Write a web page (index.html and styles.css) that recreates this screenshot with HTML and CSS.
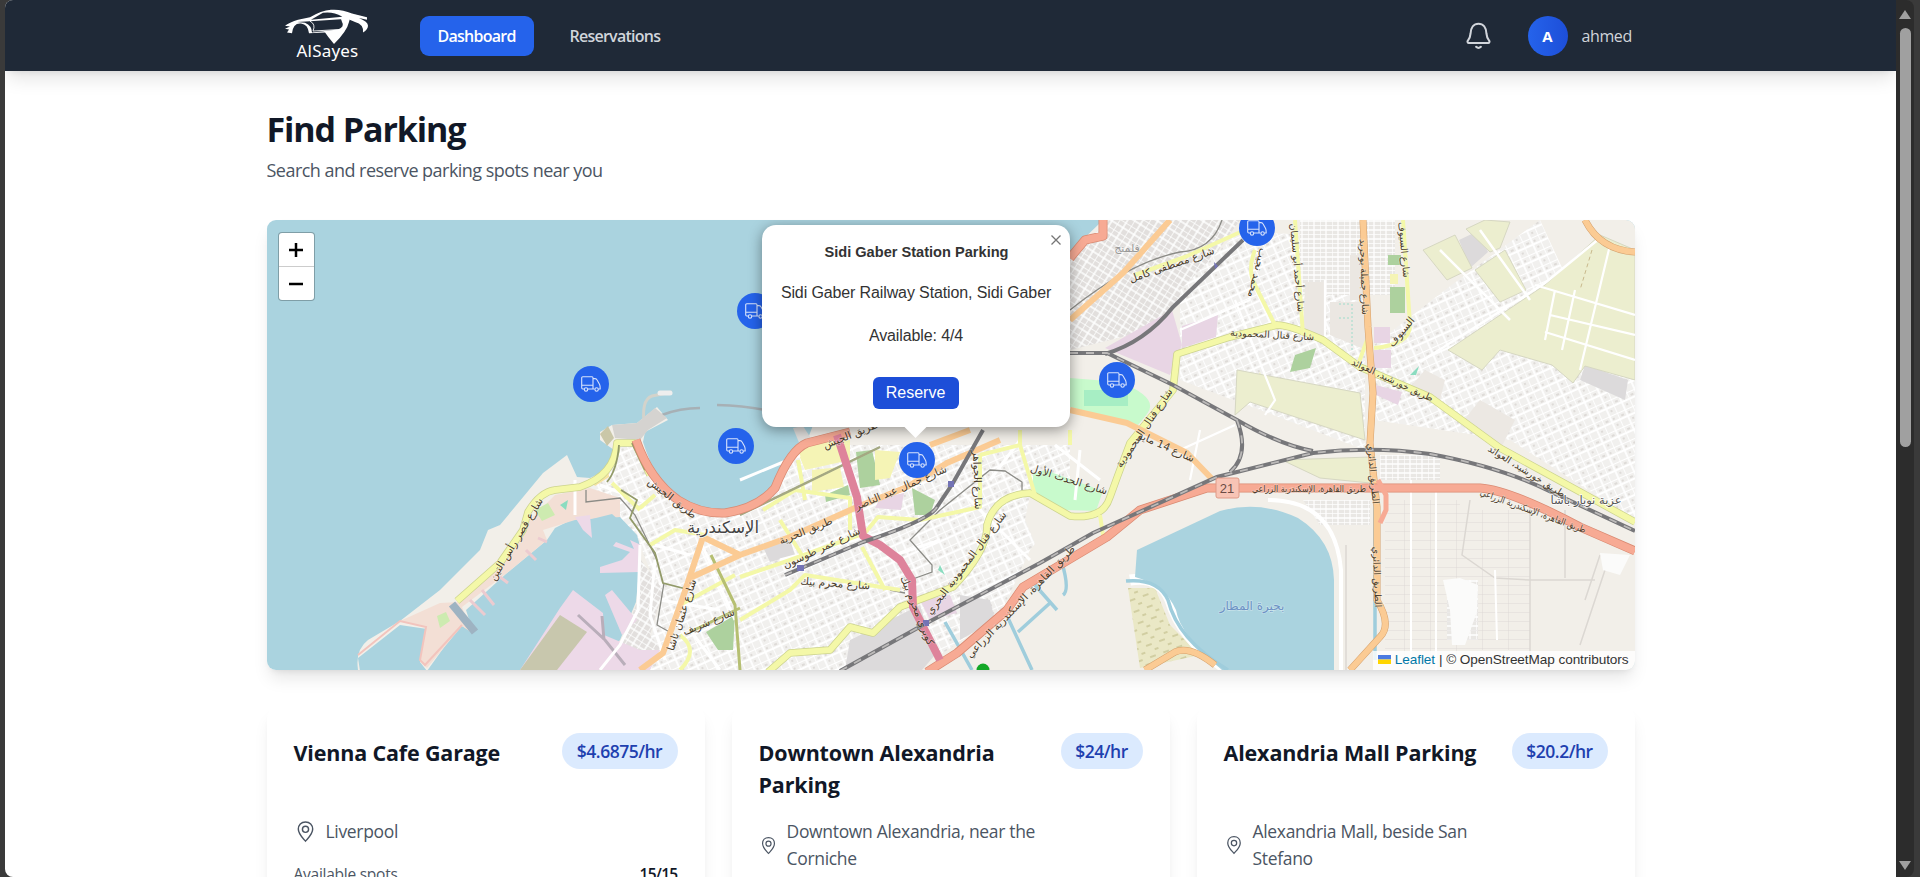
FILE: index.html
```html
<!DOCTYPE html>
<html lang="en">
<head>
<meta charset="utf-8">
<title>AlSayes</title>
<link rel="stylesheet" href="styles.css">
</head>
<body>
<div class="window">
<div class="page">
  <header class="navbar">
    <div class="nav-inner">
      <a class="logo">
        <svg class="logo-car" viewBox="0 0 84 50" fill="none" stroke="#fff">
          <path fill="#fff" stroke="none" d="M0 22Q5 17 13 14L25 11Q36 2 46 1Q57 0 67 6L82 11V14L74 12Q83 17 83 22Q83 27 78 31Q79 20 70 17L57 10Q48 3 38 5L26 14L60 10V13L25 16L12 17L20 18Q27 22 27 31L41 29 40 31 24 32Q23 20 16 19Q8 18 7 32L2 31 4 27 0 26 5 23Z"/>
          <path stroke-width="1" d="M25 16Q31 20 28 29L54 27"/>
          <path fill="#fff" stroke="none" d="M56 13Q57 7 62 9Q66 11 64 17Q62 29 49 46Q43 37 39 29L53 27Q60 23 57 17Z"/>
        </svg>
        <span>AlSayes</span>
      </a>
      <nav class="links"><a class="active"><span>Dashboard</span></a><a><span>Reservations</span></a></nav>
      <div class="account">
        <svg class="bell" viewBox="0 0 24 24" fill="none" stroke="#d1d5db" stroke-width="1.7" stroke-linecap="round" stroke-linejoin="round"><path d="M4 18.2H20C21 18.2 21.4 17 20.8 16.2C19.3 14.5 18.8 13.5 18.6 10.5C18.4 5.5 16 2.2 12 2.2S5.6 5.5 5.4 10.5C5.2 13.5 4.7 14.5 3.2 16.2C2.6 17 3 18.2 4 18.2ZM10 21.4Q12 23.3 14 21.4"/></svg>
        <span class="avatar">A</span><span class="user">ahmed</span>
      </div>
    </div>
  </header>
  <main class="content">
    <h1>Find Parking</h1>
    <p class="subtitle">Search and reserve parking spots near you</p>
    <section class="map">
      <svg class="tiles" viewBox="267 220 1368 450">
        <defs>
          <pattern id="blocks" width="17" height="15" patternUnits="userSpaceOnUse" patternTransform="rotate(-24)"><rect width="17" height="15" fill="#f1f0ee"/><path d="M0 0H17M0 7H17M0 0V15M9 0V15" stroke="#fff" stroke-width="1.8"/><path d="M3 4H6M12 11H14M12 3V5" stroke="#dedbd8" stroke-width="2"/></pattern>
          <pattern id="dense" width="13" height="12" patternUnits="userSpaceOnUse" patternTransform="rotate(32)"><rect width="13" height="12" fill="#e2dfdd"/><path d="M0 0H13M0 6H13M0 0V12M7 0V12" stroke="#fff" stroke-width="1.5"/></pattern>
          <pattern id="grid" width="12" height="9" patternUnits="userSpaceOnUse"><rect width="12" height="9" fill="#e9e7e4"/><path d="M0 0H12M0 5H12M0 0V9M6 0V9" stroke="#fff" stroke-width="1.3"/></pattern>
          <pattern id="plots" width="26" height="9" patternUnits="userSpaceOnUse"><path d="M0 0H26M0 0V9" stroke="#d9d6d2" stroke-width=".8" fill="none"/></pattern>
          <pattern id="crops" width="14" height="12" patternUnits="userSpaceOnUse" patternTransform="rotate(-20)"><rect width="14" height="12" fill="#eae8c6"/><path d="M2 3H8M9 9H13" stroke="#b9b47d"/></pattern>
        </defs>
        <rect x="267" y="220" width="1368" height="450" fill="#aad3df"/>
        <!-- land -->
        <path fill="#f2efe9" d="M358 670Q355 650 368 640L400 621L440 590L480 550L488 530L500 525L543 473L567 455L577 477L590 478L610 468L614 450L600 440L600 432L612 425L637 423L657 407L668 420L645 432L643 442Q655 480 676 500Q695 512 720 512Q750 510 773 488Q782 468 790 452L807 441L815 420H1065L1072 250L1100 223V220H1635V670Z"/>
        <path fill="url(#blocks)" d="M620 445H642Q655 495 690 510Q745 522 773 492L800 445H1070V500L1030 550L1000 615L940 655L840 670H640L662 600L640 545L605 500L590 490Z"/>
        <path fill="#f2efe9" d="M1030 495L1070 514 1100 517 1098 530 1042 560 1025 520Z"/>
        <path fill="url(#dense)" d="M1070 255L1110 220H1240L1190 290 1150 330 1070 350Z"/>
        <path fill="url(#dense)" d="M641 560L663 590 650 635 665 655 640 670H600L622 640 638 600Z"/>
        <path fill="url(#blocks)" d="M1180 290L1240 230 1365 240V450L1260 410 1180 380Z"/>
        <path fill="url(#grid)" d="M1300 220H1395V295H1300Z"/>
        <path fill="#ebe7e2" d="M1305 282H1325V345L1303 335ZM1330 302H1366V350L1330 335ZM1350 255H1364V300H1350Z"/>
        <path fill="url(#blocks)" d="M1374 345L1445 290L1540 220L1600 350 1635 380V520L1510 440 1374 420Z"/>
        <path fill="#ece8e3" d="M1480 400L1515 420 1500 450 1460 425ZM1425 370L1445 380 1440 400 1412 385Z"/>
        <!-- western harbour -->
        <path fill="#aad3df" d="M360 671L358 658 400 625 427 629 420 662 427 671 460 625 473 632 466 610 507 573 547 540 555 528 575 518 620 517 637 535 641 550 636 602 620 640 593 671Z"/>
        <path fill="#f3dfd5" d="M400 621L426 627L420 662L427 668L462 626L472 633L462 607L507 573L547 540L543 530L575 520L620 517L620 498L590 488L555 495L530 520L500 565L460 602L440 603Z"/>
        <path d="M358 655L400 621L426 627L420 660L425 665L462 625" fill="none" stroke="#f2c4bd" stroke-width="2"/>
        <path fill="#aad3df" d="M588 520L612 514 630 530 632 548 600 540 592 534Z"/>
        <path fill="#edd9e8" d="M575 517L590 515 592 538 583 530ZM600 567L622 560 630 552 613 546 616 542 634 549 630 540 641 545 640 572 600 573ZM520 670L560 608L573 590L603 613L604 635L640 650L660 650L650 670ZM605 595L612 590L637 620L622 635Z"/>
        <path fill="#c8c7ad" d="M520 670L560 615L587 632L557 670Z"/>
        <path d="M452 604L475 632" stroke="#9eb3c2" stroke-width="8"/>
        <path d="M470 600L485 615M482 590L494 605M500 577L508 583M526 550L536 560M538 538L547 542" stroke="#eccbd0" stroke-width="3"/>
        <path fill="#cdebb0" d="M535 510L548 503 555 515 542 521ZM437 616L446 612 450 621 440 628Z"/>
        <path d="M578 615L605 640L625 665M602 616L604 640" stroke="#b9aeba" stroke-width="3" fill="none"/>
        <path d="M645 430Q640 400 652 396L672 392" fill="none" stroke="#d3d3cb" stroke-width="3"/>
        <path d="M660 393H670" stroke="#eee" stroke-width="5" stroke-linecap="round"/>
        <path d="M662 415Q680 408 700 408M717 405Q750 406 775 412" fill="none" stroke="#a7b0b5" stroke-width="2.5"/>
        <path fill="#d5d3d0" d="M612 425L637 423 655 408 667 418 648 430 640 440 615 438Z"/>
        <path fill="#cac7a8" d="M600 434L608 426 614 438 607 446Z"/>
        <path fill="#f7e3a0" d="M590 480L608 466 609 477 595 486Z"/>
        <path fill="#e0dedc" d="M793 428L800 445 812 440 803 426Z"/>
        <!-- parks and areas -->
        <g fill="#add19e"><path d="M856 452L872 450 880 485 860 488ZM912 488L935 500 930 515 915 515ZM706 632L735 615 733 650 718 650ZM1390 287H1405V313H1390ZM1388 255H1401V265H1388ZM1295 355L1316 348 1310 368 1290 372ZM825 495L848 485 850 495 826 502Z"/></g>
        <path fill="#c8facc" d="M1033 474L1045 470L1103 491L1096 511L1065 510L1033 492ZM1070 378L1120 382Q1160 398 1147 414L1138 425L1070 407Z"/>
        <path fill="#a7eec4" d="M1084 390H1128V406H1084Z"/>
        <path fill="#8bdcc0" d="M560 505L568 500 566 510ZM1410 375L1419 366 1416 375ZM940 565L945 575 938 570ZM1458 595L1463 597 1460 601Z"/>
        <path d="M1339 304H1350M1339 318H1350M1352 304V350" stroke="#9edccb" stroke-dasharray="2 2" fill="none"/>
        <path fill="#f5f4b5" d="M795 445L850 440 850 460 805 470ZM875 450L900 452 890 478 875 480ZM812 470L840 467 844 487 812 492ZM1390 274H1398V284H1390ZM1252 390L1260 372 1262 380Z"/>
        <path fill="#e8d5e4" d="M880 498L904 493 901 510 875 508ZM1105 348L1172 310L1182 345L1170 375ZM1182 326L1218 315 1216 337 1182 348ZM1374 327H1390V343H1374ZM1374 350H1391V368H1374ZM1376 385L1402 392 1398 405 1376 395ZM920 600L950 595 957 613 930 620Z"/>
        <path fill="#dcdadb" d="M850 640L920 605L935 655L922 670H845ZM960 595L990 600 995 620 960 640ZM1459 240L1478 231 1488 252 1470 268ZM1585 365L1628 380 1625 400 1580 380ZM762 545L790 540 795 555 770 562Z"/>
        <g fill="#eceecf" stroke="#d6d7c2"><path d="M1423 250L1455 235 1472 268 1447 280ZM1466 229L1485 220 1510 222 1500 248 1490 252ZM1475 270L1505 250 1526 290 1500 302ZM1448 350L1545 285L1600 235L1635 250V380L1585 366L1573 383L1552 365L1500 350L1482 370ZM1237 370L1360 393 1365 440 1250 402 1235 415ZM1282 460L1370 457 1370 483 1320 478Z"/></g>
        <path d="M1535 285L1635 315M1550 315L1635 335M1545 332L1635 360M1610 245L1580 370M1555 290L1545 340M1575 290L1562 350" stroke="#fff" stroke-width="2.200" fill="none"/>
        <path d="M1592 250L1580 290" stroke="#c9b98c" stroke-dasharray="4 3"/>
        <path d="M1600 238L1545 283L1420 362M1440 250L1510 320M1480 230L1530 300" stroke="#fff" stroke-width="2.500" fill="none"/>
        <path d="M1180 330L1250 300M1235 300L1275 400L1265 415M1325 280V340M1180 450L1235 425M1200 430L1190 480" fill="none" stroke="#fff" stroke-width="2.200"/>
        <path fill="url(#grid)" d="M1303 500H1370V525H1320ZM1380 455H1440V480H1380ZM1447 580H1478V640H1447Z"/>
        <path fill="url(#plots)" d="M1385 500H1460V655H1385ZM1460 510H1530V650H1460Z"/>
        <path d="M1470 500L1462 555 1495 578 1530 580M1530 500V670M1565 510V578M1530 580H1595M1600 555L1585 600M1610 555L1580 645M1346 545V670" stroke="#dbd7d2" fill="none" stroke-width="1.5"/>
        <path d="M1436 490V670M1411 480V660M1495 570L1497 640" stroke="#fff" fill="none" stroke-width="2"/>
        <path fill="#fbfbfa" d="M1443 580L1460 578 1478 585 1477 612 1465 645 1452 645 1450 610ZM1600 553L1630 555 1620 575 1603 570Z"/>
        <!-- lakes and canals -->
        <path fill="url(#crops)" d="M1128 588L1155 588L1170 625L1200 655L1140 668Z"/>
        <path d="M1130 580Q1160 575 1170 600Q1182 640 1225 668" fill="none" stroke="#fff" stroke-width="11"/>
        <path fill="#aad3df" d="M1137 550L1220 511Q1260 500 1298 518Q1333 540 1334 580V670H1222Q1180 635 1176 610Q1165 585 1135 577Z"/>
        <path d="M1268 500Q1335 500 1341 570V670" fill="none" stroke="#fff" stroke-width="4"/>
        <path d="M1126 581Q1158 578 1168 600Q1178 640 1228 670M1062 563Q1070 590 1063 595M1035 585L1057 610M1050 603L1018 632M1008 618L1032 670M945 622L972 670M1375 500V660" fill="none" stroke="#9fcddc" stroke-width="3.5"/>
        <!-- minor streets -->
        <g fill="none" stroke="#fff" stroke-width="3"><path d="M640 545L638 610L620 645L600 670M655 560L650 615 665 660M655 545L690 555M660 600L720 610M600 485L648 503M575 480V515M700 540L735 620M690 630L720 670M740 480L800 455M780 560L930 520M950 480L1030 560M1020 440L990 480M880 560L940 540M1080 450L1075 500M1055 445L1100 480"/></g>
        <g fill="none" stroke="#8b8b86" stroke-width="1.3"><path d="M586 490V502L620 498L635 515L657 560M664 583L657 625L675 635M740 515L880 447M940 510L990 470 1005 471 1022 482V490M940 510L910 540L932 565V572L910 580M890 590L905 593M1222 220Q1212 250 1180 252Q1130 262 1070 310"/></g>
        <!-- yellow roads -->
        <g fill="none" stroke="#ccd38e" stroke-width="7.5" stroke-linejoin="round"><path d="M457 601L500 563L523 530L528 512Q540 492 555 490L580 487Q615 475 617 443H635L650 475"/><path d="M1500 448L1430 397L1360 367L1323 340Q1290 325 1277 325L1230 337L1177 354L1173 390L1130 443L1118 475L1110 497Q1103 520 1070 516L1030 493Q995 495 987 525Q988 550 953 587L900 607L873 633L850 627L830 650L790 653L768 672M1500 448L1635 522"/></g>
        <g fill="none" stroke="#f4f8a8" stroke-width="6" stroke-linejoin="round"><path d="M457 601L500 563L523 530L528 512Q540 492 555 490L580 487Q615 475 617 443H635L650 475"/><path d="M1500 448L1430 397L1360 367L1323 340Q1290 325 1277 325L1230 337L1177 354L1173 390L1130 443L1118 475L1110 497Q1103 520 1070 516L1030 493Q995 495 987 525Q988 550 953 587L900 607L873 633L850 627L830 650L790 653L768 672M1500 448L1635 522"/>
        <path stroke-width="4" d="M1255 250Q1247 270 1255 285L1275 325M1295 220L1303 335M1403 220L1410 325Q1410 345 1374 348M1367 340L1358 365M1135 275L1185 257L1245 230M740 577L790 560L865 533L878 517L920 520L980 507V455M763 510L795 490 850 498V530M798 460L805 500M780 520L805 560M740 620L790 590L805 575L900 590M862 547L885 590M612 483L640 510M640 508L655 495M650 545L675 530L705 535M680 605L735 575M1035 495L1020 445 980 455M1020 445V430M1070 445V430M1100 515L1103 535M680 635Q700 650 680 670"/></g>
        <path d="M619 445Q617 470 607 482M632 443L645 470M621 490L637 500L630 518L655 553L663 583L690 590" fill="none" stroke="#929a69" stroke-width="1.8"/>
        <path d="M711 555L735 605L740 670M690 632L740 608" fill="none" stroke="#b6bf72" stroke-width="3"/>
        <path d="M740 515L880 447" fill="none" stroke="#a4a882" stroke-width="2.5"/>
        <!-- orange roads -->
        <g fill="none" stroke="#d4a06c" stroke-width="7"><path d="M1363 220L1368 327L1373 393L1370 443L1377 507V600Q1392 625 1380 637L1350 670M1585 220Q1600 250 1635 252M1145 670L1175 652Q1190 645 1215 665"/></g>
        <g fill="none" stroke="#fbcb94" stroke-width="6" stroke-linejoin="round"><path d="M1363 220L1368 327L1373 393L1370 443L1377 507V600Q1392 625 1380 637L1350 670M1585 220Q1600 250 1635 252M1145 670L1175 652Q1190 645 1215 665"/><path d="M703 537L683 597L663 653L640 670M703 537L740 555L790 537L857 507L907 487L947 463L1000 440M690 578L740 555M1170 220L1123 273L1070 320M1070 410L1127 423L1187 453L1213 480M930 445L970 430"/></g>
        <!-- primary roads -->
        <g fill="none" stroke="#d98a72" stroke-width="9" stroke-linejoin="round"><path d="M636 440Q650 480 678 500Q700 514 725 513Q758 508 775 488Q790 450 807 443L850 432M927 672L957 653L1007 610L1023 587L1107 537L1140 510L1207 488H1480Q1510 490 1580 527L1635 551M1070 258L1085 240L1103 236V220"/></g>
        <g fill="none" stroke="#f7aa94" stroke-width="7.5" stroke-linejoin="round"><path d="M636 440Q650 480 678 500Q700 514 725 513Q758 508 775 488Q790 450 807 443L850 432M927 672L957 653L1007 610L1023 587L1107 537L1140 510L1207 488H1480Q1510 490 1580 527L1635 551M1070 258L1085 240L1103 236V220"/><path stroke-width="5" d="M1378 480L1386 495V510L1380 523"/></g>
        <path d="M837 435L857 497L863 536L880 545L900 560L912 580L913 607L940 660" fill="none" stroke="#de839b" stroke-width="8" stroke-linejoin="round"/>
        <!-- railways -->
        <g fill="none" stroke="#77777a" stroke-width="4"><path d="M840 671L923 625L1040 563L1093 533L1217 477L1313 453Q1373 446 1430 454Q1500 467 1547 490L1635 531M1070 353H1107L1173 385L1237 420Q1280 445 1313 451M1105 354Q1145 342 1173 307L1243 240M1237 420Q1250 455 1230 472M983 430L953 483L937 507Q930 520 863 542L785 575"/></g>
        <g fill="none" stroke="#bcbab9" stroke-width="1.8" stroke-dasharray="8 8"><path d="M840 671L923 625L1040 563L1093 533L1217 477L1313 453Q1373 446 1430 454Q1500 467 1547 490L1635 531M1070 353H1107L1173 385L1237 420Q1280 445 1313 451M1237 420Q1250 455 1230 472M937 507Q930 520 863 542L785 575"/></g>
        <path d="M948 481H954V487H948ZM797 565H804V571H797ZM923 620H929V626H923ZM1214 262L1218 266 1215 269Z" fill="#7373b5"/>
        <circle cx="983" cy="670" r="6.500" fill="#14a827"/>
        <!-- labels -->
        <g class="labels">
          <text class="city" x="723" y="533">الإسكندرية</text>
          <text class="place" x="1586" y="504">عزبة نوبار باشا</text>
          <text class="lake" x="1252" y="610">بحيرة المطار</text>
          <text class="small" x="1127" y="252">فلمنج</text>
          <text transform="translate(519 541) rotate(-59)">شارع قصر رأس التين</text>
          <text transform="translate(670 501) rotate(38)">طريق الجيش</text>
          <text transform="translate(852 438) rotate(-22)">طريق الجيش</text>
          <text transform="translate(685 616) rotate(-72)">شارع عثمان باشا</text>
          <text transform="translate(710 625) rotate(-22)">شارع شريف</text>
          <text transform="translate(807 534) rotate(-22)">طريق الحرية</text>
          <text transform="translate(823 551) rotate(-25)">شارع عمر طوسون</text>
          <text transform="translate(902 491) rotate(-23)">شارع جمال عبد الناصر</text>
          <text transform="translate(835 587) rotate(4)">شارع محرم بيك</text>
          <text transform="translate(914 612) rotate(68)">كوبري محرم بيك</text>
          <text transform="translate(974 480) rotate(88)">شارع الجواهر</text>
          <text transform="translate(969 565) rotate(-53)">شارع قنال المحمودية البحري</text>
          <text transform="translate(1023 604) rotate(-46)">طريق القاهرة، الإسكندرية الزراعي</text>
          <text transform="translate(1068 483) rotate(17)">شارع الحدث الأول</text>
          <text transform="translate(1147 430) rotate(-56)">شارع قنال المحمودية</text>
          <text transform="translate(1165 450) rotate(24)">شارع 14 مايو</text>
          <text transform="translate(1173 268) rotate(-19)">شارع مصطفى كامل</text>
          <text transform="translate(1254 272) rotate(104)">محمد نجيب</text>
          <text class="tight" transform="translate(1294 268) rotate(85)">شارع أحمد أبو سليمان</text>
          <text class="tight" transform="translate(1361 277) rotate(88)">شارع جميلة بوحريد</text>
          <text class="tight" transform="translate(1401 250) rotate(85)">شارع السيوف</text>
          <text transform="translate(1404 334) rotate(-50)">السيوف</text>
          <text class="tight" transform="translate(1272 338) rotate(3)">شارع قنال المحمودية</text>
          <text class="tight" transform="translate(1391 383) rotate(25)">طريق خورشيد، العوائد</text>
          <text class="tight" transform="translate(1525 474) rotate(32)">طريق خورشيد، العوائد</text>
          <text class="tight" textLength="114" lengthAdjust="spacingAndGlyphs" transform="translate(1309 492)">طريق القاهرة، الإسكندرية الزراعي</text>
          <text class="tight" textLength="112" lengthAdjust="spacingAndGlyphs" transform="translate(1532 514) rotate(20)">طريق القاهرة، الإسكندرية الزراعي</text>
          <text class="tight" transform="translate(1370 474) rotate(85)">الطريق الدائري</text>
          <text class="tight" transform="translate(1374 577) rotate(88)">الطريق الدائري</text>
        </g>
        <rect x="1216" y="478" width="23" height="20" rx="2" fill="#f8c4b5" stroke="#df9a87"/>
        <text x="1227" y="493" class="shield">21</text>
      </svg>
      <svg width="0" height="0" class="defs"><symbol id="van" viewBox="0 0 20 16"><g fill="none" stroke="#fff" stroke-opacity=".82" stroke-width="1.1" stroke-linejoin="round"><path d="M3 13H1.8Q.7 13 .7 11.8V2Q.7.8 1.8.8H11Q12 .8 12 2V13H7M12 2.6H14Q15.5 2.6 16.1 4L18.6 8.5Q19.2 9.7 19.2 13H17.5M.7 9.3H12M12 13H13.5"/><circle cx="5" cy="13.5" r="1.7"/><circle cx="15.600" cy="13.5" r="1.7"/></g></symbol></svg>
      <div class="marker m1"><svg><use href="#van"/></svg></div>
      <div class="marker m2"><svg><use href="#van"/></svg></div>
      <div class="marker m3"><svg><use href="#van"/></svg></div>
      <div class="marker m4"><svg><use href="#van"/></svg></div>
      <div class="marker m5"><svg><use href="#van"/></svg></div>
      <div class="marker m6"><svg><use href="#van"/></svg></div>
      <div class="zoom"><span><svg viewBox="0 0 14 14"><path d="M0 7H14M7 0V14"/></svg></span><span><svg viewBox="0 0 14 14"><path d="M0 7H14"/></svg></span></div>
      <div class="popup">
        <svg class="close" viewBox="0 0 10 10"><path d="M.5 .5L9.5 9.5M9.5 .5L.5 9.5"/></svg>
        <strong>Sidi Gaber Station Parking</strong>
        <p>Sidi Gaber Railway Station, Sidi Gaber</p>
        <p class="avail">Available: 4/4</p>
        <span class="reserve">Reserve</span>
      </div>
      <div class="attribution"><svg viewBox="0 0 13 9"><path fill="#4c7be1" d="M0 0H13V4.5H0Z"/><path fill="#ffd500" d="M0 4.5H13V9H0Z"/></svg><a>Leaflet</a><span>| © OpenStreetMap contributors</span></div>
    </section>
    <section class="cards">
      <article class="card">
        <div class="card-head"><h2>Vienna Cafe Garage</h2><span class="price p1">$4.6875/hr</span></div>
        <div class="address"><svg class="pin" viewBox="0 0 24 24"><path d="M12 2C7.5 2 4.5 5.2 4.5 9.5C4.5 15 9 18.5 12 22C15 18.5 19.5 15 19.5 9.5C19.5 5.2 16.5 2 12 2Z"/><circle cx="12" cy="9.7" r="3.2"/></svg><span>Liverpool</span></div>
        <div class="spots"><span>Available spots</span><b>15/15</b></div>
      </article>
      <article class="card">
        <div class="card-head"><h2>Downtown Alexandria<br>Parking</h2><span class="price p2">$24/hr</span></div>
        <div class="address"><svg class="pin small-pin" viewBox="0 0 24 24"><path d="M12 2C7.5 2 4.5 5.2 4.5 9.5C4.5 15 9 18.5 12 22C15 18.5 19.5 15 19.5 9.5C19.5 5.2 16.5 2 12 2Z"/><circle cx="12" cy="9.7" r="3.2"/></svg><span>Downtown Alexandria, near the<br>Corniche</span></div>
      </article>
      <article class="card">
        <div class="card-head"><h2>Alexandria Mall Parking</h2><span class="price p3">$20.2/hr</span></div>
        <div class="address"><svg class="pin mid-pin" viewBox="0 0 24 24"><path d="M12 2C7.5 2 4.5 5.2 4.5 9.5C4.5 15 9 18.5 12 22C15 18.5 19.5 15 19.5 9.5C19.5 5.2 16.5 2 12 2Z"/><circle cx="12" cy="9.7" r="3.2"/></svg><span>Alexandria Mall, beside San<br>Stefano</span></div>
      </article>
    </section>
  </main>
</div>
<aside class="scrollbar"><i class="arrow up"></i><i class="thumb"></i><i class="arrow down"></i></aside>
</div>
</body>
</html>
```
FILE: styles.css
```css
* { box-sizing: border-box; }
body { margin: 0; height: 877px; overflow: hidden; background: #3a3a3a; font-family: "Open Sans", "Noto Sans", sans-serif; font-size: 18px; }
.window { display: flex; height: 877px; padding: 0 6px 0 5px; }
.page { width: 1891px; height: 877px; overflow: hidden; background: #fff; border-radius: 8px 0 0 8px; }
.scrollbar { width: 18px; background: #2c2c2c; border-radius: 0 8px 8px 0; display: flex; flex-direction: column; align-items: center; padding: 10px 0 7px; }
.arrow { width: 12px; height: 9px; background: #a0a0a0; }
.up { clip-path: polygon(50% 0, 100% 100%, 0 100%); }
.down { clip-path: polygon(0 0, 100% 0, 50% 100%); margin-top: auto; }
.thumb { width: 11px; height: 419px; margin-top: 9px; background: #a0a0a0; border-radius: 6px; }
.navbar { height: 71px; background: #1f2937; box-shadow: 0 11px 17px -3px rgba(0,0,0,.1), 0 4px 7px -4px rgba(0,0,0,.1); }
.nav-inner { width: 1368px; height: 71px; margin: 0 auto; display: flex; align-items: center; }
.logo { width: 84px; margin-left: 18px; height: 71px; display: flex; flex-direction: column; align-items: center; padding-top: 9px; color: #fff; font: 17px/20px "Noto Sans", sans-serif; }
.logo-car { width: 84px; height: 50px; margin-bottom: -18px; transform: scaleY(.76); transform-origin: top; }
.logo span { letter-spacing: .2px; padding-left: 2px; }
.links { display: flex; margin-left: 51px; }
.links a { height: 40px; padding: 0 18px; border-radius: 9px; display: flex; align-items: center; font-size: 16px; font-weight: 600; color: #d1d5db; letter-spacing: -.75px; white-space: nowrap; }
.links .active { width: 114px; background: #2563eb; color: #fff; margin-right: 18px; }
.account { margin-left: auto; display: flex; align-items: center; padding-right: 4px; }
.bell { width: 29px; height: 29px; }
.avatar { width: 40px; height: 40px; margin: 0 14px 0 35px; border-radius: 50%; background: linear-gradient(90deg, #2563eb, #1d4ed8); color: #fff; font-size: 15px; font-weight: 700; display: grid; place-items: center; }
.user { width: 49px; color: #d1d5db; font-size: 16px; letter-spacing: -.4px; }
.content { width: 1368px; margin: 0 auto; padding-top: 36px; }
h1 { margin: 0; font-size: 34px; line-height: 45px; font-weight: 700; color: #111827; letter-spacing: -1.1px; }
.subtitle { margin: 5px 0 0; line-height: 27px; color: #4b5563; letter-spacing: -.53px; }
.map { position: relative; height: 450px; margin-top: 36px; border-radius: 9px; overflow: clip; box-shadow: 0 11px 17px -3px rgba(0,0,0,.1), 0 4px 7px -4px rgba(0,0,0,.1); font-family: "Liberation Sans", sans-serif; }
.tiles { display: block; width: 1368px; height: 450px; }
.defs { position: absolute; }
.labels text { font: 10.5px "DejaVu Sans", sans-serif; text-anchor: middle; fill: #4a3c2a; stroke: #fff; stroke-opacity: .3; stroke-width: 1.5px; paint-order: stroke; }
.labels .tight { font-size: 9.5px; }
.labels .city { font-size: 16.5px; fill: #444; stroke-opacity: .9; }
.labels .place { font-size: 11.5px; fill: #555; stroke-opacity: .9; }
.labels .small { font-size: 11px; fill: #999; }
.labels .lake { font-size: 12px; fill: #6d92c5; }
.shield { font: 13px "Liberation Sans", sans-serif; text-anchor: middle; fill: #6b4b45; }
.marker { position: absolute; width: 36px; height: 36px; border-radius: 50%; background: #2563eb; display: grid; place-items: center; }
.marker svg { width: 20px; height: 16px; }
.m1 { left: 306px; top: 146px; }
.m2 { left: 470px; top: 73px; }
.m3 { left: 451px; top: 208px; }
.m4 { left: 632px; top: 222px; }
.m5 { left: 832px; top: 142px; }
.m6 { left: 972px; top: -10px; }
.zoom { position: absolute; left: 11px; top: 12px; width: 37px; border: 1.5px solid rgba(0,0,0,.25); border-radius: 4px; background: #fff; background-clip: padding-box; }
.zoom span { height: 33px; display: grid; place-items: center; }
.zoom span + span { border-top: 1px solid #ccc; height: 34px; }
.zoom svg { width: 14px; height: 14px; stroke: #000; stroke-width: 2.5; }
.popup { position: absolute; left: 495px; top: 5px; width: 308px; height: 202px; background: #fff; border-radius: 14px; box-shadow: 0 3px 14px rgba(0,0,0,.4); display: flex; flex-direction: column; align-items: center; color: #333; white-space: nowrap; }
.popup::after { content: ""; position: absolute; left: 142px; top: 201px; width: 24px; height: 12px; background: #fff; clip-path: polygon(0 0, 100% 0, 50% 100%); }
.close { position: absolute; right: 9px; top: 10px; width: 10px; height: 10px; stroke: #757575; stroke-width: 1.3; }
.popup strong { font-size: 14.6px; line-height: 20px; margin-top: 17px; padding-left: 2px; }
.popup p { margin: 20px 0 0; font-size: 16px; line-height: 22px; letter-spacing: -.12px; padding-left: 1px; }
.popup .avail { margin-top: 21px; }
.reserve { margin-top: 30px; width: 86px; height: 32px; border-radius: 6px; background: #1d4ed8; color: #fff; font-size: 16px; display: grid; place-items: center; }
.attribution { position: absolute; right: 0; bottom: 0; height: 19px; padding: 0 6px 2px 5px; background: rgba(255,255,255,.8); display: flex; align-items: center; gap: 4px; font-size: 13.6px; letter-spacing: -.08px; color: #333; white-space: nowrap; }
.attribution svg { width: 13px; height: 9px; }
.attribution a { color: #0078a8; }
.cards { display: grid; grid-template-columns: repeat(3, 438px); gap: 27px; margin-top: 36px; }
.card { height: 300px; padding: 27px; border-radius: 13px; background: #fff; box-shadow: 0 11px 17px -3px rgba(0,0,0,.08), 0 4px 7px -4px rgba(0,0,0,.08); }
.card-head { display: flex; justify-content: space-between; height: 72px; }
h2 { margin: 4px 0 0; font-size: 21.5px; line-height: 32px; font-weight: 700; color: #111827; white-space: nowrap; letter-spacing: -.16px; }
.price { height: 36px; border-radius: 18px; background: #dbeafe; color: #1e40af; font-size: 17.5px; font-weight: 600; display: grid; place-items: center; letter-spacing: -.5px; }
.p1 { width: 116px; }
.p2 { width: 82px; }
.p3 { width: 96px; }
.address { display: flex; align-items: center; margin-top: 13px; color: #4b5563; font-size: 17.5px; line-height: 27px; letter-spacing: -.32px; white-space: nowrap; }
.pin { width: 23px; height: 23px; margin-right: 9px; fill: none; stroke: #4b5563; stroke-width: 1.5; }
.small-pin { width: 19px; height: 19px; }
.mid-pin { width: 20px; height: 20px; }
.spots { display: flex; justify-content: space-between; margin-top: 18px; font-size: 15.5px; line-height: 23px; color: #4b5563; letter-spacing: -.25px; }
.spots b { color: #111827; font-weight: 600; letter-spacing: -.7px; }
```
